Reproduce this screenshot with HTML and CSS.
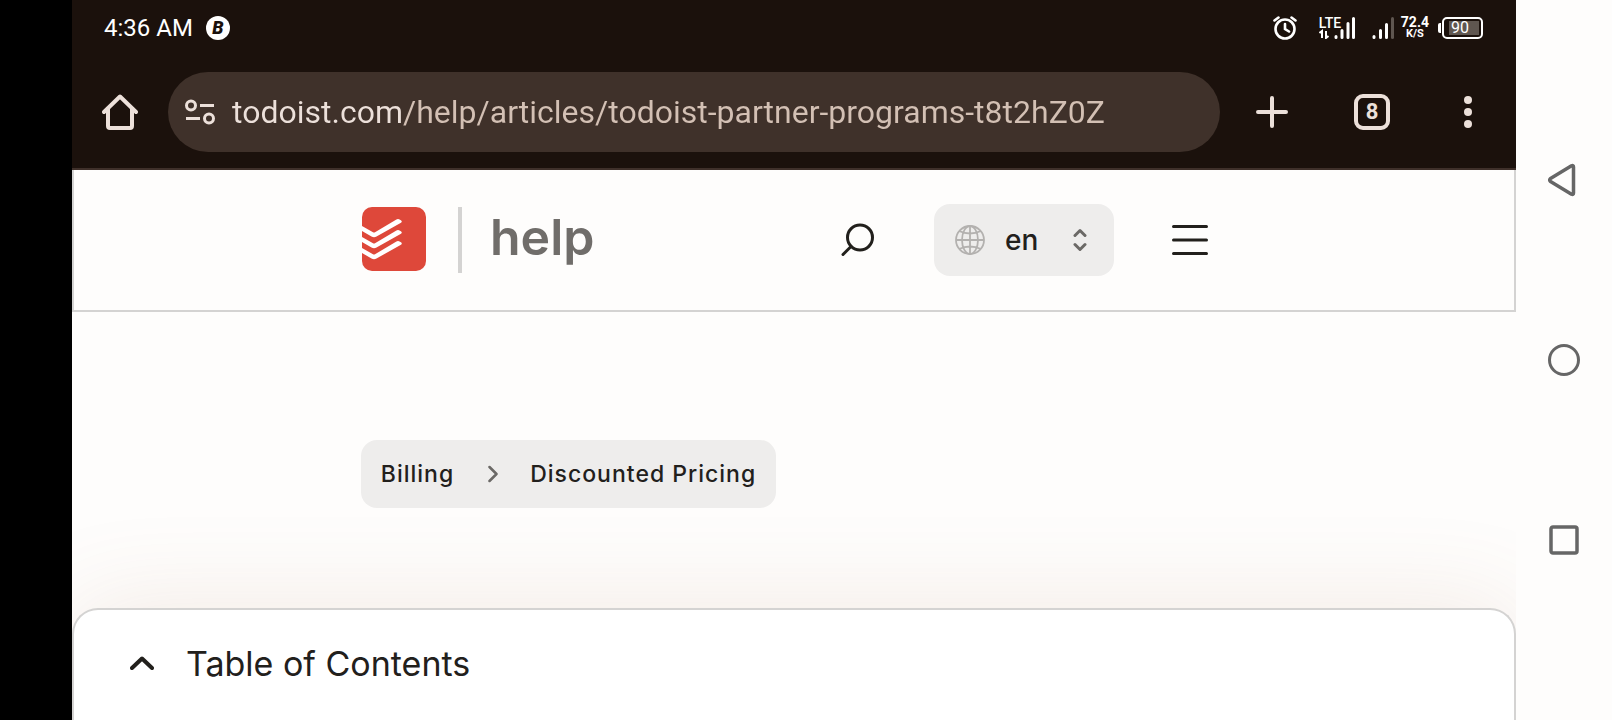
FILE: index.html
```html
<!DOCTYPE html>
<html lang="en">
<head>
    <meta charset="utf-8">
    <meta name="viewport" content="width=device-width, initial-scale=1">
    <title>Todoist Partner Programs</title>
    <link rel="stylesheet" href="styles.css">
</head>
<body>
    <div class="cutout"></div>

    <div class="screen">
        <!-- Status bar -->
        <div class="status-bar">
            <span class="time">4:36 AM</span>
            <span class="app-badge">B</span>
            <div class="status-icons">
                <svg class="alarm" width="24" height="24" viewBox="0 0 24 24" fill="none" stroke="#fff" stroke-width="2.6" stroke-linecap="round">
                    <circle cx="12" cy="13" r="9.5"/>
                    <path d="M12 8v5l4 2.500M1.500 4.500l4-3M22.500 4.500l-4-3"/>
                </svg>
                <div class="lte">
                    <span class="lte-label">LTE</span>
                    <svg width="36" height="22" viewBox="0 0 36 22" stroke="#fff" stroke-width="3" stroke-linecap="round">
                        <path d="M17 20.500v-1M23 20.500v-7M29 20.500v-14M34.500 20.500v-19"/>
                        <path d="M0.500 16l2.500-2v7M7 14v7l2.500-2" fill="none" stroke-width="2" stroke-linecap="butt"/>
                    </svg>
                </div>
                <svg class="signal" width="22" height="22" viewBox="0 0 22 22" stroke="#fff" stroke-width="3" stroke-linecap="round">
                    <path d="M2 20.500v-1M8.500 20.500v-7M14.500 20.500v-13"/>
                    <path d="M20.500 20.500v-19" stroke="#5f5650"/>
                </svg>
                <div class="speed"><span>72.4</span><small>K/S</small></div>
                <div class="battery"><span>90</span></div>
            </div>
        </div>

        <!-- Browser toolbar -->
        <div class="toolbar">
            <button class="tool" aria-label="Home">
                <svg width="36" height="36" viewBox="0 0 36 36" fill="none" stroke="#ece0da" stroke-width="4" stroke-linecap="round" stroke-linejoin="round">
                    <path d="M2 18L18 2.500L34 18M6 15v17q0 2 2 2h20q2 0 2-2V15"/>
                </svg>
            </button>
            <div class="address">
                <svg width="32" height="28" viewBox="0 0 32 28" fill="none" stroke="#ece0da" stroke-width="3">
                    <circle cx="7" cy="7.500" r="4.500"/>
                    <path d="M16 7.500h14M2 20.500h14"/>
                    <circle cx="25" cy="20.500" r="4.500"/>
                </svg>
                <input type="text" aria-label="Address" value="todoist.com/help/articles/todoist-partner-programs-t8t2hZ0Z">
            </div>
            <button class="tool" aria-label="New tab">
                <svg width="32" height="32" viewBox="0 0 32 32" stroke="#ece0da" stroke-width="4" stroke-linecap="round">
                    <path d="M2 16h28M16 2v28"/>
                </svg>
            </button>
            <button class="tool tabs" aria-label="Tabs"><span class="tab-count">8</span></button>
            <button class="tool" aria-label="Menu">
                <svg width="8" height="32" viewBox="0 0 8 32" fill="#ece0da">
                    <circle cx="4" cy="4" r="4"/><circle cx="4" cy="16" r="4"/><circle cx="4" cy="28" r="4"/>
                </svg>
            </button>
        </div>

        <header class="site-header">
            <div class="container">
                <a class="brand" href="#">
                    <svg width="64" height="64" viewBox="0 0 64 64">
                        <rect width="64" height="64" rx="10" fill="#de483a"/>
                        <g fill="#fff">
                            <path id="check" d="M0 19l11 6.200q1 .6 2 0L34 12.700q2-1.200 4 0 3 1.300 1 3L14.500 29.500q-2.500 1.300-5 0L0 24z"/>
                            <use href="#check" y="11"/>
                            <use href="#check" y="22"/>
                        </g>
                    </svg>
                    <span class="brand-name">help</span>
                </a>
                <button class="icon-btn" aria-label="Search">
                    <svg width="34" height="34" viewBox="0 0 34 34" fill="none" stroke="#22201c" stroke-width="3" stroke-linecap="round">
                        <circle cx="19" cy="14.500" r="12.500"/>
                        <path d="M10 23.500l-8 8"/>
                    </svg>
                </button>
                <label class="language">
                    <svg width="30" height="30" viewBox="0 0 30 30" fill="none" stroke="#b3b1af" stroke-width="1.800">
                        <circle cx="15" cy="15" r="14"/>
                        <ellipse cx="15" cy="15" rx="8" ry="14"/>
                        <path d="M15 1v28M1 15h28M4 6q11 5 22 0M4 24q11-5 22 0"/>
                    </svg>
                    <select aria-label="Language">
                        <option>en</option>
                    </select>
                    <svg width="14" height="24" viewBox="0 0 14 24" fill="none" stroke="#6b6966" stroke-width="3" stroke-linecap="round" stroke-linejoin="round">
                        <path d="M2 7.500l5-5 5 5M2 16.500l5 5 5-5"/>
                    </svg>
                </label>
                <button class="icon-btn" aria-label="Open menu">
                    <svg width="36" height="32" viewBox="0 0 36 32" stroke="#22201c" stroke-width="3" stroke-linecap="round">
                        <path d="M1.500 2.500h33M1.500 16h33M1.500 29.500h33"/>
                    </svg>
                </button>
            </div>
        </header>

        <main>
            <div class="container">
                <nav class="breadcrumb" aria-label="Breadcrumb">
                    <a href="#">Billing</a>
                    <svg width="10" height="18" viewBox="0 0 10 18" fill="none" stroke="#6b6966" stroke-width="2.500" stroke-linecap="round" stroke-linejoin="round">
                        <path d="M1.500 2l7 7-7 7"/>
                    </svg>
                    <a href="#">Discounted Pricing</a>
                </nav>
            </div>
        </main>

        <button class="toc">
            <svg width="24" height="14" viewBox="0 0 24 14" fill="none" stroke="#22201c" stroke-width="4" stroke-linecap="round" stroke-linejoin="round">
                <path d="M2 12L12 2.500L22 12"/>
            </svg>
            Table of Contents
        </button>
    </div>

    <!-- System navigation -->
    <div class="system-nav">
        <button aria-label="Back">
            <svg width="32" height="34" viewBox="0 0 32 34" fill="none" stroke="#666" stroke-width="3.500" stroke-linejoin="round">
                <path d="M2.500 15.500L23.500 2.800q2-.8 2 1.200v26q0 2-2 1.200L2.500 18.500q-1.500-1.500 0-3z"/>
            </svg>
        </button>
        <button aria-label="Home screen">
            <svg width="32" height="32" viewBox="0 0 32 32" fill="none" stroke="#666" stroke-width="3">
                <circle cx="16" cy="16" r="14.500"/>
            </svg>
        </button>
        <button aria-label="Recent apps">
            <svg width="30" height="30" viewBox="0 0 30 30" fill="none" stroke="#666" stroke-width="3.500">
                <rect x="2" y="2" width="26" height="26" rx="2"/>
            </svg>
        </button>
    </div>
</body>
</html>
```
FILE: styles.css
```css
* {
    box-sizing: border-box;
}

body {
    margin: 0;
    display: flex;
    min-height: 100vh;
    background-color: #fefdfc;
    color: #22201c;
    font-family: Inter, "Liberation Sans", sans-serif;
}

button {
    padding: 0;
    border: none;
    background: none;
    color: inherit;
    font: inherit;
    cursor: pointer;
}

svg {
    display: block;
    flex: none;
}

a {
    color: inherit;
    text-decoration: none;
}

.cutout {
    width: 72px;
    background-color: #000;
}

.screen {
    flex: 1;
    min-width: 0;
    display: flex;
    flex-direction: column;
    overflow: hidden;
}

/* Status bar */
.status-bar {
    display: flex;
    align-items: center;
    height: 56px;
    padding: 0 33px 0 32px;
    background-color: #1b110c;
    color: #fff;
    font-family: Roboto, sans-serif;
}

.time {
    font-size: 24px;
}

.app-badge {
    width: 24px;
    height: 24px;
    margin-left: 13px;
    border-radius: 50%;
    background-color: #fff;
    color: #1b110c;
    font-size: 18px;
    font-weight: 900;
    font-style: italic;
    line-height: 24px;
    text-align: center;
}

.status-icons {
    display: flex;
    align-items: center;
    margin-left: auto;
}

.alarm {
    margin-right: 22px;
}

.lte {
    position: relative;
    margin-right: 17px;
}

.lte-label {
    position: absolute;
    top: -1px;
    left: 0;
    font-size: 14px;
    font-weight: 500;
    line-height: 14px;
}

.signal {
    margin-right: 7px;
}

.speed {
    display: flex;
    flex-direction: column;
    align-items: center;
    margin-right: 9px;
    font-weight: 700;
}

.speed span {
    font-size: 14px;
    line-height: 12px;
}

.speed small {
    font-size: 11px;
    line-height: 12px;
}

.battery {
    position: relative;
    width: 41px;
    height: 22px;
    margin-left: 4px;
    padding: 2px 2px 2px 5px;
    border: 2px solid #fff;
    border-radius: 5px;
}

.battery::before {
    content: "";
    position: absolute;
    top: 4px;
    left: -6px;
    width: 3px;
    height: 10px;
    border-radius: 2px 0 0 2px;
    background-color: #fff;
}

.battery span {
    display: block;
    padding-left: 2px;
    background-color: #5f5650;
    font-size: 16px;
    line-height: 14px;
}

/* Browser toolbar */
.toolbar {
    display: flex;
    align-items: center;
    height: 114px;
    padding: 0 12px;
    border-bottom: 2px solid #3f302a;
    background-color: #1b110c;
    color: #ece0da;
    font-family: Roboto, sans-serif;
}

.tool {
    display: flex;
    justify-content: center;
    align-items: center;
    width: 72px;
    height: 72px;
}

.tabs {
    margin: 0 24px 0 28px;
}

.address {
    flex: 1;
    display: flex;
    align-items: center;
    gap: 16px;
    height: 80px;
    margin: 0 16px 0 12px;
    padding: 0 40px 0 16px;
    border-radius: 40px;
    background-color: #3f312a;
}

/* host part is lighter than the path */
.address input {
    flex: 1;
    min-width: 0;
    height: 48px;
    padding: 0;
    border: none;
    outline: none;
    background: linear-gradient(90deg, #ece0da 170px, #d3c0b4 170px);
    -webkit-background-clip: text;
    background-clip: text;
    color: transparent;
    font-family: Roboto, sans-serif;
    font-size: 32px;
}

.tab-count {
    width: 36px;
    height: 36px;
    border: 4px solid #ece0da;
    border-radius: 9px;
    font-size: 22px;
    font-weight: 700;
    line-height: 28px;
}

/* Site header */
.site-header {
    border: 2px solid #d4d3d2;
    border-top: none;
}

.container {
    width: 60%;
    min-width: 864px;
    margin: 0 auto;
}

.site-header .container {
    display: flex;
    align-items: center;
    gap: 40px;
    height: 140px;
}

.brand {
    display: flex;
    align-items: flex-start;
    margin-right: auto;
}

.brand-name {
    margin-left: 32px;
    padding: 0 0 6px 28px;
    border-left: 4px solid #d4d3d2;
    color: #706d6a;
    font-size: 50px;
    font-weight: 600;
    line-height: 60px;
}

.icon-btn {
    display: flex;
    justify-content: center;
    align-items: center;
    width: 72px;
    height: 72px;
}

.language {
    display: flex;
    align-items: center;
    width: 180px;
    height: 72px;
    padding: 0 27px 0 21px;
    border-radius: 16px;
    background-color: #eeedec;
}

.language select {
    flex: 1;
    min-width: 0;
    margin-left: 20px;
    padding: 0;
    border: none;
    background: none;
    appearance: none;
    color: inherit;
    font: inherit;
    font-size: 28px;
    font-weight: 500;
}

/* Page content */
main {
    flex: 1;
    padding-top: 128px;
}

.breadcrumb {
    display: inline-flex;
    align-items: center;
    height: 68px;
    padding: 0 20px;
    border-radius: 16px;
    background-color: #eeedec;
    font-size: 23px;
    font-weight: 500;
    letter-spacing: 1px;
}

.breadcrumb svg {
    margin: 0 32px 0 34px;
}

.toc {
    display: flex;
    align-items: center;
    gap: 32px;
    height: 112px;
    padding: 0 56px 4px;
    border: 2px solid #d4d3d2;
    border-bottom: none;
    border-radius: 26px 26px 0 0;
    background-color: #fff;
    box-shadow: 0 0 100px rgba(160, 100, 60, 0.13);
    font-size: 34px;
}

/* System navigation */
.system-nav {
    display: flex;
    flex-direction: column;
    justify-content: center;
    align-items: center;
    gap: 108px;
    width: 96px;
}

.system-nav button {
    display: flex;
    justify-content: center;
    align-items: center;
    width: 72px;
    height: 72px;
}
```
